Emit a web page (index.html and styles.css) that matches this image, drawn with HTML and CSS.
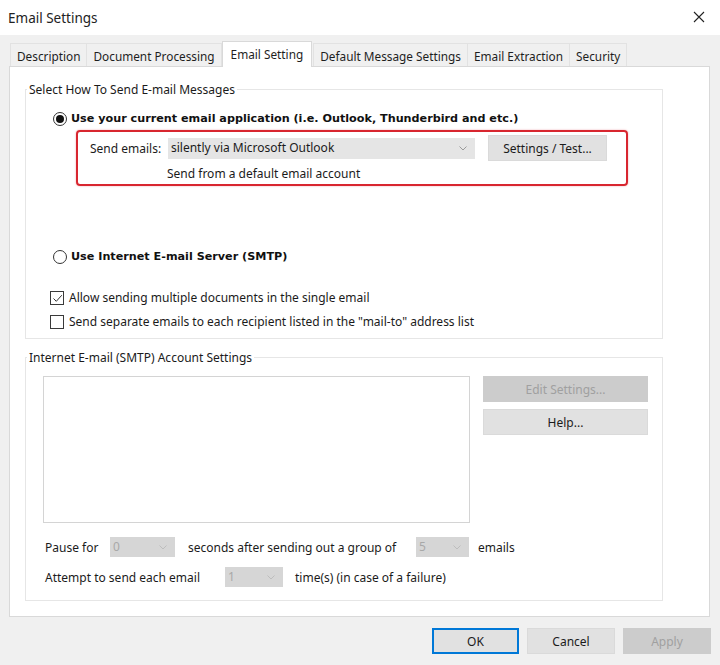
FILE: index.html
```html
<!DOCTYPE html>
<html lang="en">
<head>
    <meta charset="UTF-8">
    <meta name="viewport" content="width=device-width, initial-scale=1.0">
    <title>Email Settings</title>
    <link rel="stylesheet" href="styles.css">
</head>
<body>
    <div class="dialog">
        <div class="titlebar">
            <span class="title">Email Settings</span>
            <!-- close cross -->
            <svg class="close" width="12" height="12" viewBox="0 0 12 12">
                <path d="M1 1 L11 11 M11 1 L1 11" stroke="#222" stroke-width="1.1" fill="none"/>
            </svg>
        </div>

        <div class="frame">
            <div class="tabs">
                <div class="tab">Description</div>
                <div class="tab">Document Processing</div>
                <div class="tab active">Email Setting</div>
                <div class="tab">Default Message Settings</div>
                <div class="tab">Email Extraction</div>
                <div class="tab">Security</div>
            </div>

            <div class="panel">
                <fieldset class="group group-send">
                    <legend>Select How To Send E-mail Messages</legend>
                    <div class="group-body">
                        <div class="radio-row">
                            <span class="radio checked"></span>
                            <span class="strong">Use your current email application (i.e. Outlook, Thunderbird and etc.)</span>
                        </div>

                        <!-- the red frame around the client options -->
                        <div class="highlight">
                            <div class="send-row">
                                <span class="send-label">Send emails:</span>
                                <div class="select select-client">
                                    <span>silently via Microsoft Outlook</span>
                                    <svg class="chev" width="8" height="5" viewBox="0 0 8 5"><path d="M0.5 0.5 L4 4 L7.5 0.5" stroke="#9a9a9a" fill="none"/></svg>
                                </div>
                                <button class="btn btn-settings">Settings / Test...</button>
                            </div>
                            <div class="send-note">Send from a default email account</div>
                        </div>

                        <div class="radio-row radio-smtp">
                            <span class="radio"></span>
                            <span class="strong">Use Internet E-mail Server (SMTP)</span>
                        </div>

                        <div class="check-row check-first">
                            <span class="check">
                                <svg width="11" height="11" viewBox="0 0 11 11"><path d="M1.5 5.5 L4.3 8.3 L9.8 2.2" stroke="#333" stroke-width="1" fill="none"/></svg>
                            </span>
                            <span>Allow sending multiple documents in the single email</span>
                        </div>
                        <div class="check-row">
                            <span class="check"></span>
                            <span>Send separate emails to each recipient listed in the "mail-to" address list</span>
                        </div>
                    </div>
                </fieldset>

                <fieldset class="group group-smtp">
                    <legend>Internet E-mail (SMTP) Account Settings</legend>
                    <div class="group-body">
                        <div class="account-row">
                            <div class="account-list"></div>
                            <div class="account-buttons">
                                <button class="btn btn-side" disabled>Edit Settings...</button>
                                <button class="btn btn-side btn-help">Help...</button>
                            </div>
                        </div>

                        <div class="option-row row-pause">
                            <span class="pause-label">Pause for</span>
                            <div class="select select-off select-pause"><span>0</span><svg class="chev" width="8" height="5" viewBox="0 0 8 5"><path d="M0.5 0.5 L4 4 L7.5 0.5" stroke="#bdbdbd" fill="none"/></svg></div>
                            <span class="pause-text">seconds after sending out a group of</span>
                            <div class="select select-off select-group"><span>5</span><svg class="chev" width="8" height="5" viewBox="0 0 8 5"><path d="M0.5 0.5 L4 4 L7.5 0.5" stroke="#bdbdbd" fill="none"/></svg></div>
                            <span class="after-select">emails</span>
                        </div>
                        <div class="option-row row-attempt">
                            <span class="attempt-label">Attempt to send each email</span>
                            <div class="select select-off select-attempt"><span>1</span><svg class="chev" width="8" height="5" viewBox="0 0 8 5"><path d="M0.5 0.5 L4 4 L7.5 0.5" stroke="#bdbdbd" fill="none"/></svg></div>
                            <span class="after-select attempt-text">time(s) (in case of a failure)</span>
                        </div>
                    </div>
                </fieldset>
            </div>

            <div class="footer">
                <button class="btn btn-foot btn-ok">OK</button>
                <button class="btn btn-foot">Cancel</button>
                <button class="btn btn-foot" disabled>Apply</button>
            </div>
        </div>
    </div>
</body>
</html>
```

FILE: styles.css
```css
body {
    margin: 0;
    padding: 0;
    font-family: "Noto Sans", sans-serif;
    font-size: 12px;
    line-height: 16px;
    color: #1b1b1b;
    background-color: #ffffff;
}
.dialog {
    width: 720px;
    height: 665px;
    overflow: hidden;
}

/* title bar */
.titlebar {
    height: 35px;
    display: flex;
    align-items: center;
    justify-content: space-between;
    padding: 0 15px 0 8px;
    background: #ffffff;
}
.title {
    font-size: 13.5px;
    color: #222;
}
.close {
    margin-top: -2px;
}

/* gray window body */
.frame {
    background-color: #f0f0f0;
    padding: 0 10px 0 9px;
    height: 630px;
}
.tabs {
    display: flex;
    align-items: flex-end;
    padding: 7px 0 0 1px;
    height: 24px;
    font-size: 11.8px;
}
.tab {
    height: 21px;
    padding: 1px 6px 0 6px;
    line-height: 22px;
    border: 1px solid #e2e2e2;
    border-bottom: none;
    margin-right: -1px;
    background: #f0f0f0;
    color: #1e1e1e;
}
.tab.active {
    height: 25px;
    padding: 0 8px;
    line-height: 25px;
    margin: 0 1px -1px 1px;
    border-color: #d9d9d9;
    background: #ffffff;
    position: relative;
    z-index: 1;
}
.panel {
    background: #ffffff;
    border: 1px solid #d9d9d9;
    padding: 14px 46px 15px 15px;
}

/* group boxes */
.group {
    margin: 0;
    padding: 0;
    border: 1px solid #e6e6e6;
    min-width: 0;
}
.group legend {
    padding: 0 2px;
    margin-left: 1px;
    line-height: 17px;
}
.group-send .group-body {
    padding: 13px 0 8px 27px;
}
.group-smtp {
    margin-top: 10px;
}
.group-smtp .group-body {
    padding: 10px 14px 13px 17px;
}

.strong {
    font-family: "DejaVu Sans", sans-serif;
    font-weight: bold;
    font-size: 11.2px;
    color: #111;
}
.radio-row, .check-row {
    display: flex;
    align-items: center;
    height: 16px;
}
.radio {
    width: 12px;
    height: 12px;
    border: 1px solid #333;
    border-radius: 50%;
    margin-right: 4px;
    display: flex;
    align-items: center;
    justify-content: center;
}
.radio.checked::after {
    content: "";
    width: 8px;
    height: 8px;
    border-radius: 50%;
    background: #111;
}
.radio-smtp {
    margin-top: 63px;
}
.check {
    width: 12px;
    height: 12px;
    border: 1px solid #3a3a3a;
    margin: 0 5px 0 -3px;
    display: flex;
    align-items: center;
    justify-content: center;
}
.check-first {
    margin-top: 25px;
}
.check-row + .check-row {
    margin-top: 8px;
}

/* red highlight frame */
.highlight {
    width: 524px;
    margin: 3px 0 0 23px;
    padding: 3px 12px 2px 12px;
    border: 2px solid #d8262f;
    border-radius: 4px;
    box-shadow: 0 0 2px rgba(216, 38, 47, 0.4);
}
.send-row {
    display: flex;
    align-items: center;
    height: 26px;
}
.send-label {
    width: 78px;
    padding-top: 1px;
}
.send-note {
    margin: 5px 0 0 77px;
}

/* fake drop-downs */
.select {
    height: 21px;
    display: flex;
    align-items: center;
    justify-content: space-between;
    padding: 0 8px 0 3px;
    box-sizing: border-box;
    background: #e5e5e5;
}
.select-client {
    width: 307px;
}
.select-off {
    height: 20px;
    background: #d6d6d6;
    color: #a8a8a8;
}
.select-pause {
    width: 65px;
}
.select-group {
    width: 53px;
}
.select-attempt {
    width: 58px;
}

/* buttons */
.btn {
    font-family: "Noto Sans", sans-serif;
    font-size: 12px;
    color: #1b1b1b;
    background: #e1e1e1;
    border: 1px solid #dadada;
    padding: 0;
    height: 26px;
}
.btn:disabled {
    background: #cccccc;
    border-color: #cccccc;
    color: #a0a0a0;
}
.btn-settings {
    width: 119px;
    margin-left: 13px;
}
.account-row {
    display: flex;
    align-items: flex-start;
}
.account-list {
    width: 425px;
    height: 145px;
    border: 1px solid #d4d4d4;
    background: #ffffff;
}
.account-buttons {
    display: flex;
    flex-direction: column;
    margin-left: 13px;
    width: 165px;
}
.btn-help {
    margin-top: 7px;
}

.option-row {
    display: flex;
    align-items: center;
    height: 20px;
    padding-left: 2px;
}
.option-row > span {
    padding-top: 2px;
}
.row-pause {
    margin-top: 14px;
}
.row-attempt {
    margin-top: 10px;
}
.pause-label {
    width: 65px;
}
.pause-text {
    width: 228px;
    margin-left: 13px;
}
.attempt-label {
    width: 180px;
}
.after-select {
    margin-left: 9px;
}
.attempt-text {
    margin-left: 12px;
}

/* bottom buttons */
.footer {
    display: flex;
    justify-content: flex-end;
    gap: 8px;
    padding-top: 11px;
    margin-right: -1px;
}
.btn-foot {
    width: 87px;
}
.btn-foot + .btn-foot {
    width: 88px;
}
.btn-ok {
    border: 1px solid #0078d7;
    box-shadow: inset 0 0 0 1px #0078d7;
}
```
